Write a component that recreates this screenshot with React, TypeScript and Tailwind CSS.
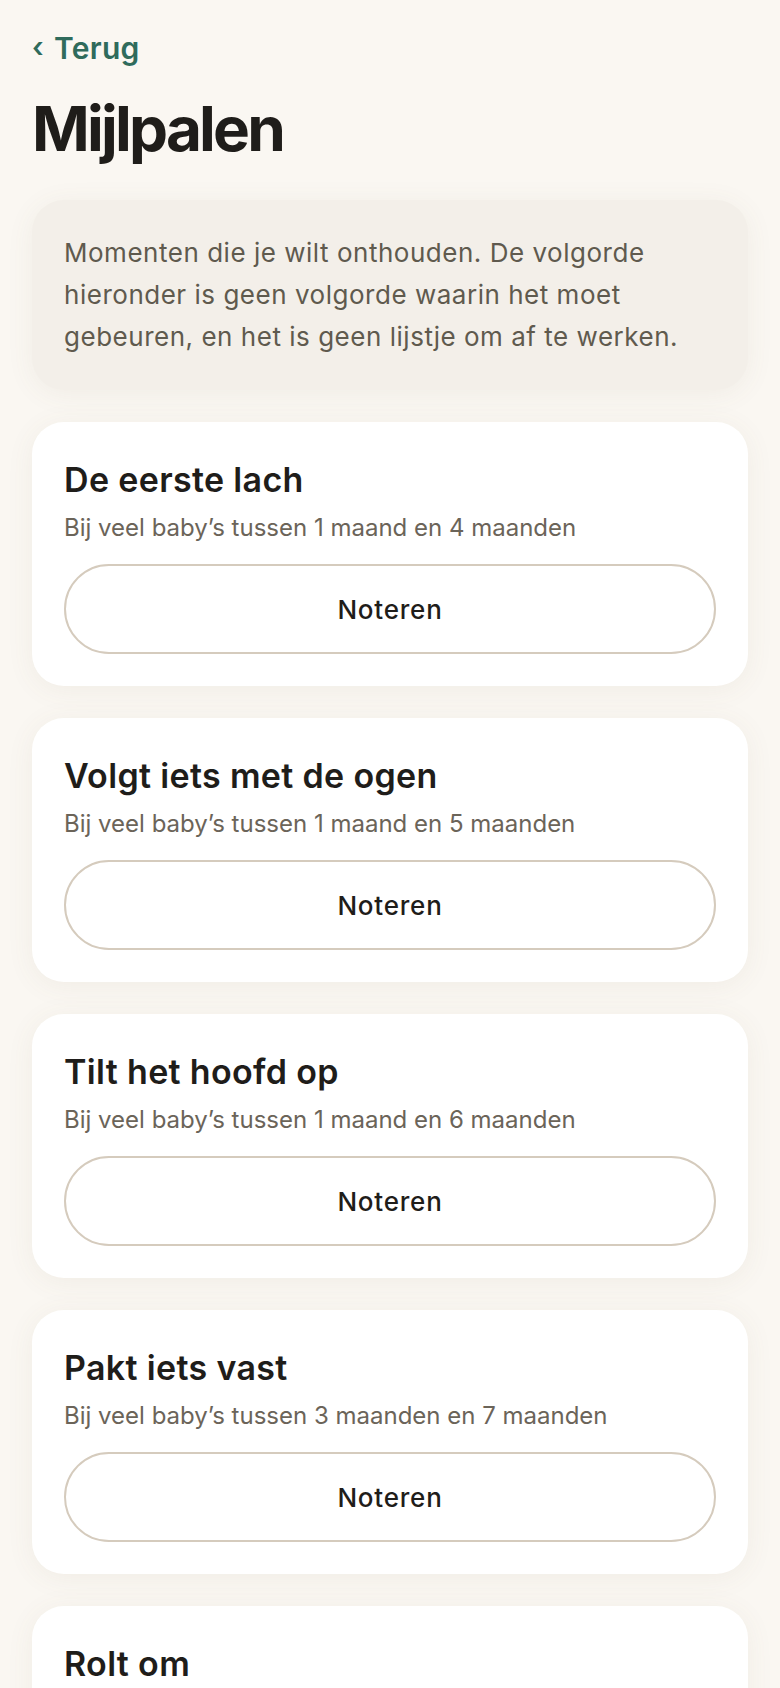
const milestones = [
  { title: 'De eerste lach', range: 'Bij veel baby’s tussen 1 maand en 4 maanden' },
  { title: 'Volgt iets met de ogen', range: 'Bij veel baby’s tussen 1 maand en 5 maanden' },
  { title: 'Tilt het hoofd op', range: 'Bij veel baby’s tussen 1 maand en 6 maanden' },
  { title: 'Pakt iets vast', range: 'Bij veel baby’s tussen 3 maanden en 7 maanden' },
  { title: 'Rolt om', range: 'Bij veel baby’s tussen 4 maanden en 8 maanden' },
];

const MilestoneCard = ({ title, range }: { title: string; range: string }) => (
  <div className="bg-white rounded-[32px] px-8 pt-8 pb-8 shadow-[0_4px_28px_rgba(120,100,70,0.07)]">
    <h2 className="text-[34px] leading-[52px] font-semibold tracking-[0.01em] text-[#1f1d1a]">{title}</h2>
    <p className="mt-1 text-[24px] leading-[36px] text-[#6b6459]">{range}</p>
    <button className="mt-[18px] w-full h-[90px] rounded-full border-2 border-[#d5cbbd] bg-white text-[26px] font-medium tracking-[0.03em] text-[#1f1d1a]">
      Noteren
    </button>
  </div>
);

export default function App() {
  return (
    <div
      className="min-h-screen bg-[#faf7f2] px-8 pt-[30px] pb-16"
      style={{ fontFamily: 'Inter, "Noto Sans", sans-serif' }}
    >
      {/* Back link */}
      <a href="#" className="inline-flex items-center gap-[10px] text-[30px] leading-[36px] font-semibold tracking-[0.01em] text-[#2f6b5c]">
        <span className="text-[28px] leading-none -mt-[2px]">‹</span>
        <span>Terug</span>
      </a>

      <h1 className="mt-[29px] text-[62px] leading-[68px] font-bold tracking-[-0.045em] text-[#1f1d1a]">Mijlpalen</h1>

      {/* Intro */}
      <div className="mt-[37px] rounded-[32px] bg-[#f3efe9] p-8 shadow-[0_4px_28px_rgba(120,100,70,0.07)]">
        <p className="text-[26px] leading-[42px] tracking-[0.02em] text-[#5f5a4e]">
          Momenten die je wilt onthouden. De volgorde hieronder is geen volgorde waarin het moet gebeuren, en het is
          geen lijstje om af te werken.
        </p>
      </div>

      <div className="mt-8 flex flex-col gap-8">
        {milestones.map((m) => (
          <MilestoneCard key={m.title} title={m.title} range={m.range} />
        ))}
      </div>
    </div>
  );
}
